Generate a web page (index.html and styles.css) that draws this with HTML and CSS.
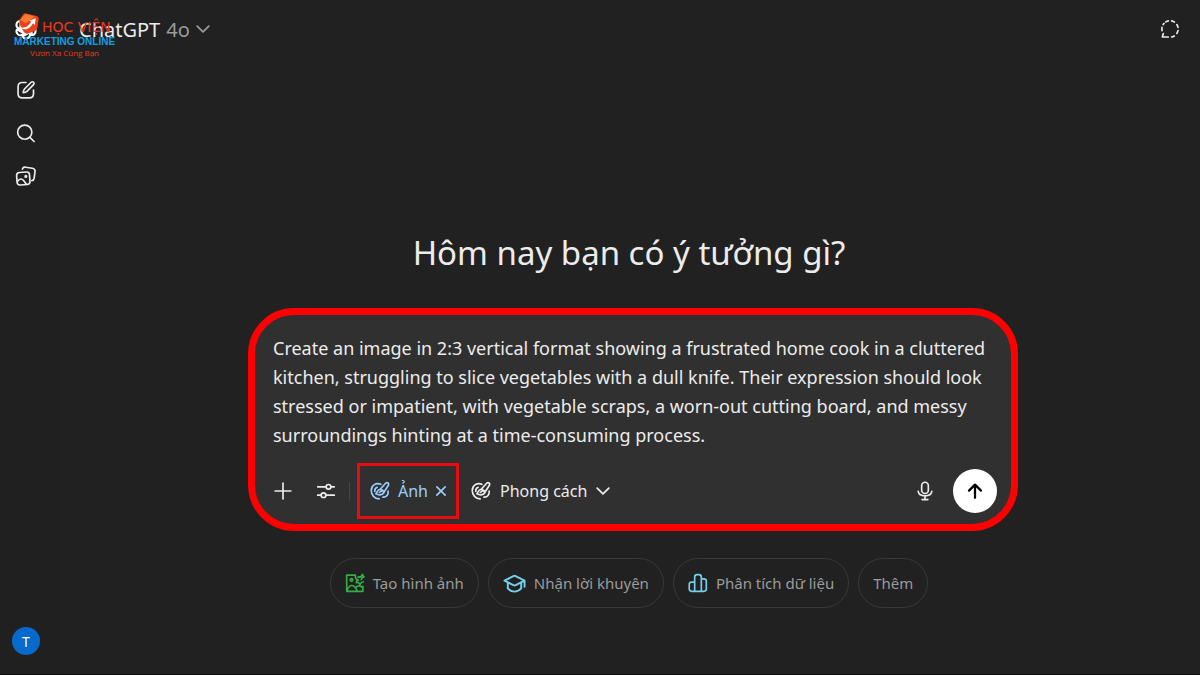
FILE: index.html
```html
<!DOCTYPE html>
<html lang="vi">
<head>
<meta charset="utf-8">
<meta name="viewport" content="width=device-width, initial-scale=1">
<title>ChatGPT</title>
<link rel="stylesheet" href="styles.css">
</head>
<body>
<svg class="sprite" aria-hidden="true">
  <symbol id="palette" viewBox="0 0 24 24" overflow="visible">
    <path d="M13 4C7.500 1.500 1.500 5 1.500 11.500c0 5.500 4 9.700 9.500 10M5.800 12.500c-.3-2.500.8-4.300 2.800-5"/>
    <path d="M12 10.200 18.800 2.700c1.900-1.900 4.600.2 3.300 2.500L16.300 14"/>
    <path d="M12 10.200c-3.500-.4-3 3.600-5 5.200 4.300 2.100 9.300 1.200 9.300-1.900 0-2-1.700-3.300-4.300-3.300ZM14.500 11.500l-3.300 2.200M21.800 12c.5 4.500-2 7.700-6.300 7.400"/>
  </symbol>
  <symbol id="chevron" viewBox="0 0 24 24" overflow="visible"><path d="m2 7 10 10L22 7"/></symbol>
</svg>

<div class="app">
  <nav class="rail" aria-label="Thanh bên">
    <a class="brand" href="#" aria-label="ChatGPT">
      <svg class="icon knot" viewBox="0 0 24 24">
        <g id="petal"><path d="M12 7.200 8 9.500V5.600a3.900 3.900 0 0 1 7.300-2l-7.300 4.200"/></g>
        <use href="#petal" transform="rotate(60 12 12)"/><use href="#petal" transform="rotate(120 12 12)"/>
        <use href="#petal" transform="rotate(180 12 12)"/><use href="#petal" transform="rotate(240 12 12)"/>
        <use href="#petal" transform="rotate(300 12 12)"/>
      </svg>
    </a>
    <button class="rail-button" type="button" aria-label="Đoạn chat mới">
      <svg class="icon" viewBox="0 0 24 24"><path d="M12 3H7.500C4 3 2.500 4.500 2.500 8v8.500C2.500 20 4 21.500 7.500 21.500H16c3.500 0 5-1.500 5-5V12"/><path d="M18.200 2.700c1.900-1.900 4.800 1 2.900 2.900l-8 8c-1 1-2.400 1.500-4.500 1.700.2-2.100.600-3.500 1.600-4.500Z"/></svg>
    </button>
    <button class="rail-button" type="button" aria-label="Tìm kiếm">
      <svg class="icon" viewBox="0 0 24 24"><circle cx="10.500" cy="11" r="8.500"/><path d="m16.700 17.200 5 5"/></svg>
    </button>
    <button class="rail-button" type="button" aria-label="Thư viện">
      <svg class="icon" viewBox="0 0 24 24"><rect x="1" y="7.500" width="15.500" height="15" rx="3.500" transform="rotate(-4 9 15)"/><path d="M7.700 3.700C8.200 2 9.400 1.200 11.500 1.500l8 1.200c2.500.4 3.700 1.900 3.300 4.300l-1 7.500c-.3 1.900-1.200 2.900-2.800 3.100"/><path d="M2 18.200c2.600-3.400 5-3.400 7.100-.7l3.400 4.500"/><circle cx="11.800" cy="12.500" r=".9"/></svg>
    </button>
    <button class="avatar" type="button" aria-label="Tài khoản">T</button>
  </nav>

  <main class="main">
    <header class="topbar">
      <button class="model" type="button"><span>ChatGPT</span><span class="version">4o</span><svg class="icon small" viewBox="0 0 24 24"><use href="#chevron"/></svg></button>
      <button class="temporary" type="button" aria-label="Đoạn chat tạm thời">
        <svg class="icon" viewBox="0 0 24 24"><path d="M7 3.500Q8.500 2.500 10 2.300M14 2.300Q15.600 2.600 17.200 3.600M20.200 6.700Q21.200 8.200 21.600 10M21.600 14Q21.200 15.800 20.200 17.300M17.200 20.400Q15.600 21.300 14 21.600M10 21.600H2.800L4 17.500M2.400 14Q2.100 12 2.400 10M3.800 6.700L4.800 5.400"/></svg>
      </button>
    </header>

    <section class="content">
      <h1 class="greeting">Hôm nay bạn có ý tưởng gì?</h1>

      <form class="composer">
        <textarea class="prompt" rows="4" aria-label="Nội dung yêu cầu">Create an image in 2:3 vertical format showing a frustrated home cook in a cluttered kitchen, struggling to slice vegetables with a dull knife. Their expression should look stressed or impatient, with vegetable scraps, a worn-out cutting board, and messy surroundings hinting at a time-consuming process.</textarea>
        <div class="tools">
          <button class="tool" type="button" aria-label="Thêm tệp"><svg class="icon" viewBox="0 0 24 24"><path d="M12 2.500v19M2.500 12h19"/></svg></button>
          <button class="tool" type="button" aria-label="Công cụ"><svg class="icon" viewBox="0 0 24 24"><path d="M2 7h10M18 7h4M2 17h4M12 17h10"/><circle cx="15" cy="7" r="2.800"/><circle cx="9" cy="17" r="2.800"/></svg></button>
          <span class="divider"></span>
          <button class="mode" type="button"><svg class="icon" viewBox="0 0 24 24"><use href="#palette"/></svg><span>Ảnh</span><svg class="icon tiny" viewBox="0 0 24 24"><path d="m2 2 20 20M22 2 2 22"/></svg></button>
          <button class="style" type="button"><svg class="icon" viewBox="0 0 24 24"><use href="#palette"/></svg><span>Phong cách</span><svg class="icon small" viewBox="0 0 24 24"><use href="#chevron"/></svg></button>
          <button class="mic" type="button" aria-label="Đọc chính tả"><svg class="icon" viewBox="0 0 24 24"><rect x="8" y="1.500" width="8" height="13.500" rx="4"/><path d="M3.800 12.500c1.300 7.200 15.100 7.200 16.400 0M12 18v4M8.500 22.300h7"/></svg></button>
          <button class="send" type="submit" aria-label="Gửi"><svg class="icon" viewBox="0 0 24 24"><path d="M12 21V4M4 11.500 12 3.500l8 8"/></svg></button>
        </div>
      </form>

      <div class="suggestions">
        <button class="chip" type="button"><svg class="icon green" viewBox="0 0 24 24"><path d="M12.500 2.500H2v19.500h19.500v-6M2.500 21c3-8 8-8 12 0M13.500 17c2.500-2.500 5-2 7.500.5M12.500 2.500c-.5 4 1 5.500 3.500 6-2 .5-2.500 1.500-2.500 3 2.500-.5 4 .5 4.500 2.500.5-2 1.500-3 4-3.500M15.500 5c3.500.2 5-1 5.500-3.500.2 1.500 1 2.500 2 3-2 .5-3 1.500-3.500 3.500"/><circle cx="7.800" cy="8.300" r="1.500"/></svg>Tạo hình ảnh</button>
        <button class="chip" type="button"><svg class="icon cyan cap" viewBox="0 0 24 24"><path d="m1.500 9 9.300-4.700q1.200-.6 2.400 0L22.500 9l-9.300 4.700q-1.200.6-2.400 0ZM5 11v6.200c3.800 4.400 10.200 4.400 14 0V11M22.500 9v6.500"/></svg>Nhận lời khuyên</button>
        <button class="chip" type="button"><svg class="icon cyan" viewBox="0 0 24 24"><path d="M8 22H4.500Q1.500 22 1.500 19v-5.500Q1.500 11 4.500 11H8ZM8 22V5q0-3 3-3h2q3 0 3 3v17ZM16 7h3q3 0 3 3v9q0 3-3 3h-3Z"/></svg>Phân tích dữ liệu</button>
        <button class="chip" type="button">Thêm</button>
      </div>
    </section>
  </main>
</div>

<div class="watermark">
  <svg class="emblem" viewBox="0 0 28 28"><path fill="#e8421c" d="M4 8 9 1q1-1 3-.5l12 3q3 1 2.500 4L25 17q-.5 3-3 4l-8 3q-3 1-5-2L4 13Z"/><path fill="#ff7a30" d="m5 8 5-6q1-1 3-.5L22 4 11 12Z"/><path fill="#fff" d="M5 17c6 1 10-2 13-7l-3-1 8-3-1 8-2-2c-4 7-10 9-15 5Z"/></svg>
  <p class="mark-name">HỌC VIỆN</p>
  <p class="mark-field">MARKETING ONLINE</p>
  <p class="mark-motto">Vươn Xa Cùng Bạn</p>
</div>
</body>
</html>
```
FILE: styles.css
```css
* { box-sizing: border-box; }

body {
  margin: 0;
  background: #212121;
  color: #ececec;
  font-family: "Noto Sans", "Open Sans", sans-serif;
  font-size: 16px;
}

button {
  display: flex;
  align-items: center;
  justify-content: center;
  margin: 0;
  padding: 0;
  border: 0;
  background: none;
  color: inherit;
  font: inherit;
  white-space: nowrap;
  cursor: pointer;
}

.sprite { position: absolute; width: 0; height: 0; }

.icon {
  flex: none;
  width: 20px;
  height: 20px;
  overflow: visible;
  fill: none;
  stroke: currentColor;
  stroke-width: 2;
  stroke-linecap: round;
  stroke-linejoin: round;
}
.icon.small { width: 14px; height: 14px; stroke-width: 3; }
.icon.tiny { width: 10px; height: 10px; stroke-width: 4; }

.app {
  display: grid;
  grid-template-columns: 58px 1fr;
  min-height: 100vh;
  border-bottom: 1px solid #0c0c0c;
}

.rail {
  display: flex;
  flex-direction: column;
  align-items: flex-start;
  gap: 3px;
  padding: 8px 6px 19px;
  background: #202020;
}
.brand { display: grid; place-items: center; width: 40px; height: 40px; margin-bottom: 19px; color: #fff; }
.knot { width: 24px; height: 24px; }
.rail-button { width: 40px; height: 40px; }
.avatar {
  width: 28px;
  height: 28px;
  margin: auto 6px 0;
  border-radius: 50%;
  background: #0669cc;
  color: #fff;
  font-size: 14px;
}

.main { display: flex; flex-direction: column; min-width: 0; }

.topbar {
  display: flex;
  align-items: center;
  justify-content: space-between;
  height: 60px;
  padding: 0 20px 2px 21px;
}
.model { gap: 6px; font-size: 20px; }
.version, .model .icon { color: #9b9b9b; }

.content {
  display: flex;
  flex-direction: column;
  align-items: center;
  padding: 168px 24px 24px;
}
.greeting { margin: 0 0 30px; font-size: 33px; font-weight: 400; line-height: 50px; }

.composer {
  width: 100%;
  max-width: 770px;
  margin-left: 8px;
  padding: 19px 14px 5px 18px;
  border: 7px solid #fe0000;
  border-radius: 46px;
  background: #303030;
}
.prompt {
  display: block;
  width: 100%;
  padding: 0;
  border: 0;
  outline: 0;
  resize: none;
  overflow: hidden;
  background: none;
  color: #ececec;
  font: inherit;
  font-size: 18px;
  line-height: 29px;
}
.tools { display: flex; align-items: center; margin-top: 13px; }
.tool { width: 20px; height: 40px; margin-right: 23px; }
.tool + .divider { width: 1px; height: 18px; margin: 0 7px 0 -10px; background: #454545; }
.mode {
  gap: 8px;
  width: 102px;
  height: 56px;
  border: 3px solid #e80c10;
  color: #99ceff;
}
.style { gap: 9px; margin-left: 12px; }
.mic { margin-left: auto; }
.send { width: 44px; height: 44px; margin-left: 18px; border-radius: 50%; background: #fff; color: #000; }
.send .icon { width: 18px; height: 18px; stroke-width: 3; }

.suggestions { display: flex; flex-wrap: wrap; justify-content: center; gap: 9px; margin-top: 27px; }
.chip {
  gap: 8px;
  height: 50px;
  padding: 0 14px;
  border: 1px solid #383838;
  border-radius: 25px;
  color: #9b9b9b;
  font-size: 15px;
}
.green { color: #35ae47; }
.cyan { color: #76d0eb; }
.cap { width: 23px; height: 23px; }

.watermark {
  position: absolute;
  top: 13px;
  left: 14px;
  display: grid;
  grid-template-columns: 28px auto;
  font-family: "Liberation Sans", Arial, sans-serif;
  pointer-events: none;
}
.watermark p { margin: 0; white-space: nowrap; }
.emblem { width: 28px; height: 24px; }
.mark-name { color: #e83a20; font-family: "DejaVu Sans", sans-serif; font-size: 14px; line-height: 28px; }
.watermark .mark-field { grid-column: 1 / -1; margin-top: -4px; color: #109fe0; font-size: 10px; line-height: 10px; font-weight: 700; }
.mark-motto { grid-column: 1 / -1; justify-self: center; color: #e83a20; font-family: "Open Sans", sans-serif; font-size: 8px; line-height: 11px; }
```
